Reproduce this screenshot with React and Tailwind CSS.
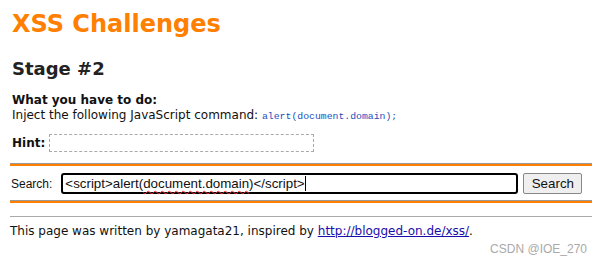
export default function App() {
  const verdana = { fontFamily: '"DejaVu Sans", Verdana, sans-serif' };
  return (
    <div className="w-[602px] h-[263px] bg-white overflow-hidden relative text-[#111]" style={verdana}>
      <div className="px-[10px]">
        <h1 className="pt-[10px] text-[24px] leading-[28px] font-bold text-[#ff8000] pl-[2px]">XSS Challenges</h1>
        <h2 className="mt-[20px] text-[18px] leading-[22px] font-bold text-[#222] pl-[2px]">Stage #2</h2>
        <div className="mt-[13px] pl-[2px] text-[12px] leading-[14px]">
          <div className="font-bold">What you have to do:</div>
          <div className="mt-[1px]">
            Inject the following JavaScript command:{" "}
            <span className="text-[#1a4fc0] text-[9.8px]" style={{ fontFamily: '"Liberation Mono", monospace' }}>alert(document.domain);</span>
          </div>
        </div>
        <div className="mt-[10px] pl-[2px] flex items-center text-[12px] h-[18px]">
          <span className="font-bold">Hint:</span>
          <span className="ml-[4px] w-[265px] h-[18px] border border-dashed border-[#aaa]"></span>
        </div>
        <div className="mt-[11px] border-t border-[#999]">
          <div className="h-[2px] bg-[#ff8000]"></div>
        </div>
        <div className="flex items-center h-[21px] mt-[7px]" style={{ fontFamily: '"Liberation Sans", Arial, sans-serif' }}>
          <span className="text-[12px] pl-[1px]">Search:</span>
          <div className="ml-[9px] w-[457px] h-[21px] border-2 border-black rounded-[3px] flex items-center px-[2px] text-[13.33px]">
            <span>&lt;script&gt;alert(</span>
            <span className="underline decoration-wavy decoration-red-500 decoration-1 underline-offset-2">document.domain</span>
            <span>)&lt;/script&gt;</span>
            <span className="w-[1px] h-[15px] bg-black"></span>
          </div>
          <button className="ml-[5px] h-[21px] w-[59px] bg-[#efefef] border border-[#888] rounded-[2px] text-[13.33px]">Search</button>
        </div>
        <div className="mt-[6px] border-t border-[#999]">
          <div className="h-[2px] bg-[#ff8000]"></div>
        </div>
        <div className="mt-[13px] border-t border-[#aaa]"></div>
        <div className="mt-[7px] text-[12px] leading-[14px]">
          This page was written by yamagata21, inspired by{" "}
          <a className="text-[#1a0dab] underline" href="#">http://blogged-on.de/xss/</a>.
        </div>
      </div>
      <div className="absolute right-[15px] top-[240px] text-[12px] text-[#aaa]" style={{ fontFamily: '"Liberation Sans", Arial, sans-serif' }}>CSDN @IOE_270</div>
    </div>
  );
}
